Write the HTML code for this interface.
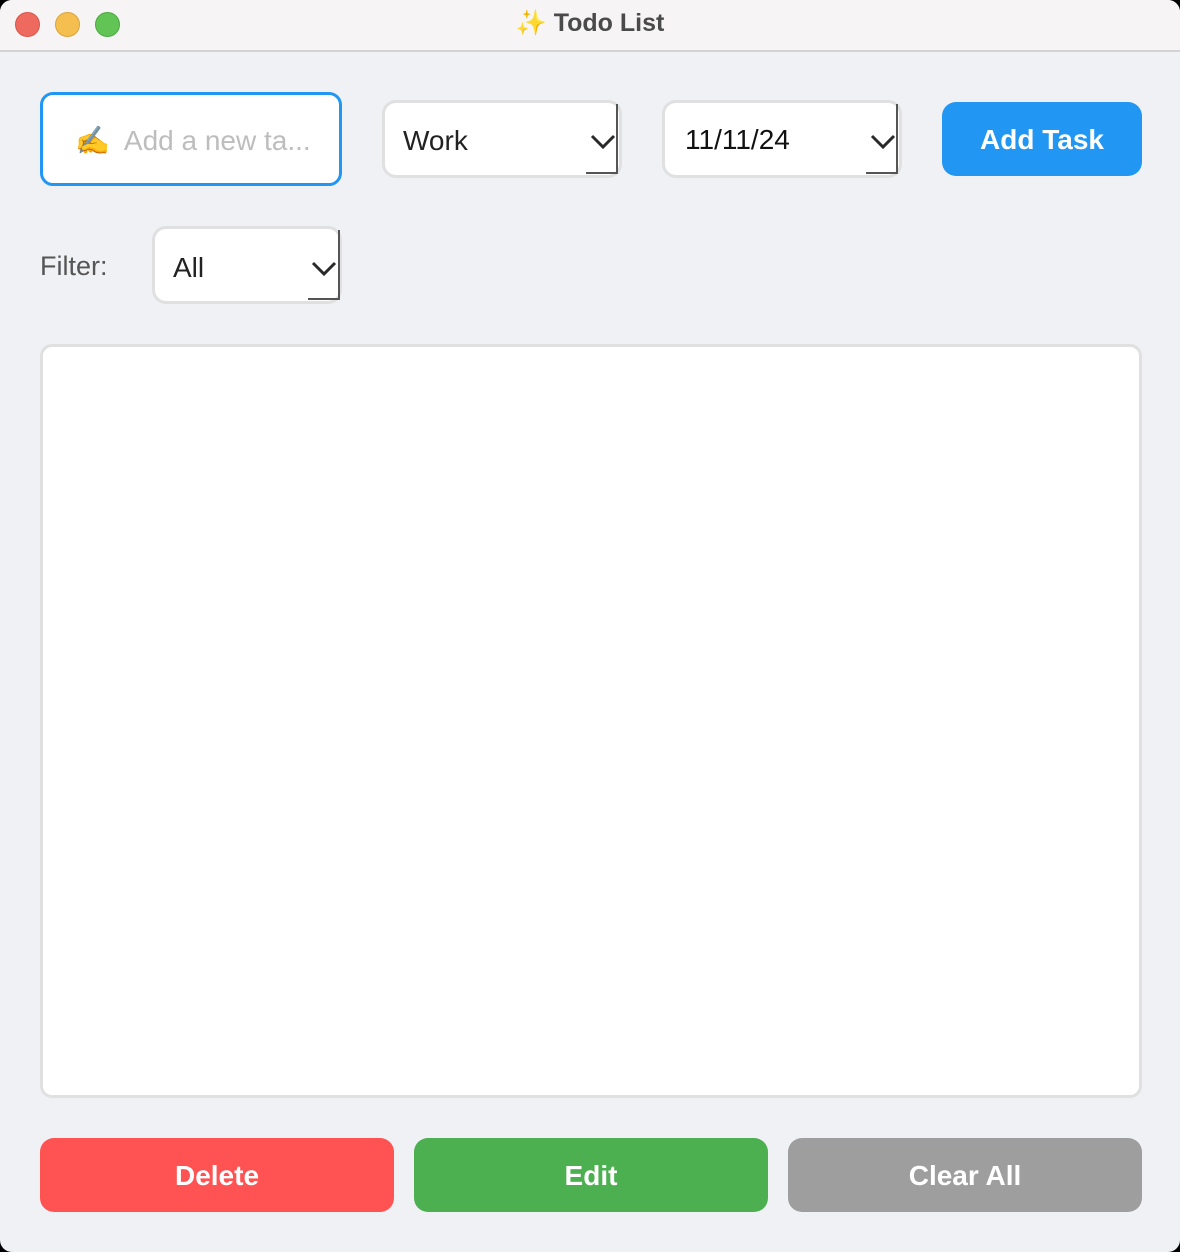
<!DOCTYPE html>
<html><head><meta charset="utf-8"><style>
*{margin:0;padding:0;box-sizing:border-box}
body{width:1180px;height:1252px;background:#000;font-family:"Liberation Sans",sans-serif;overflow:hidden;position:relative}
.win{position:absolute;left:0;top:0;width:1180px;height:1252px;background:#f0f1f5;border-radius:12px;overflow:hidden}
.tb{position:absolute;left:0;top:0;width:1180px;height:52px;background:#f6f4f4;border-bottom:2px solid #d4d2d2}
.dot{position:absolute;top:12px;width:25px;height:25px;border-radius:50%}
.title{position:absolute;left:0;right:0;top:9px;text-align:center;font-size:25px;font-weight:bold;color:#4a4a4a}
.abs{position:absolute}
.inp{left:40px;top:92px;width:302px;height:94px;border:3px solid #2196f3;border-radius:13px;background:#fff}
.sel{border:3px solid #e0e0e0;border-radius:14px;background:#fff;height:78px}
.sel span{position:absolute;left:18px;top:22px;font-size:28px;color:#222}
.sel svg{position:absolute}
.vr{position:absolute;width:2px;background:#555}
.hr{position:absolute;height:2px;background:#555}
.btn{position:absolute;border-radius:14px;color:#fff;font-weight:bold;font-size:28px;text-align:center;line-height:76px;height:74px}
</style></head><body><div class="win">
<div class="tb">
<div class="dot" style="left:15px;background:#ee6a5f;border:1px solid #d9544a"></div>
<div class="dot" style="left:55px;background:#f5bf4f;border:1px solid #dba33d"></div>
<div class="dot" style="left:95px;background:#61c454;border:1px solid #4ea843"></div>
<div class="title"><span style="color:#f5c84a">✨</span> Todo List</div>
</div>
<div class="abs inp"><span class="abs" style="left:32px;top:29px;font-size:28px;color:#bdbdbd;white-space:nowrap"><span style="color:#e8a93a">✍</span>&nbsp; Add a new ta...</span></div>

<div class="abs sel" style="left:382px;top:100px;width:240px"><span>Work</span>
<svg style="left:205px;top:30px" width="26" height="18"><path d="M2 3 L13 14 L24 3" stroke="#2a2a2a" stroke-width="3" fill="none"/></svg></div>
<div class="vr" style="left:616px;top:104px;height:70px"></div><div class="hr" style="left:586px;top:172px;width:32px"></div>

<div class="abs sel" style="left:662px;top:100px;width:240px"><span style="color:#111;left:20px;top:21px">11/11/24</span>
<svg style="left:205px;top:30px" width="26" height="18"><path d="M2 3 L13 14 L24 3" stroke="#2a2a2a" stroke-width="3" fill="none"/></svg></div>
<div class="vr" style="left:896px;top:104px;height:70px"></div><div class="hr" style="left:866px;top:172px;width:32px"></div>

<div class="btn" style="left:942px;top:102px;width:200px;background:#2196f3">Add Task</div>

<div class="abs" style="left:40px;top:251px;font-size:27px;color:#555">Filter:</div>
<div class="abs sel" style="left:152px;top:226px;width:190px"><span style="top:23px">All</span>
<svg style="left:156px;top:31px" width="26" height="18"><path d="M2 3 L13 14 L24 3" stroke="#2a2a2a" stroke-width="3" fill="none"/></svg></div>
<div class="vr" style="left:338px;top:230px;height:70px"></div><div class="hr" style="left:308px;top:298px;width:32px"></div>

<div class="abs" style="left:40px;top:344px;width:1102px;height:754px;background:#fff;border:3px solid #e0e0e0;border-radius:12px"></div>

<div class="btn" style="left:40px;top:1138px;width:354px;background:#ff5252">Delete</div>
<div class="btn" style="left:414px;top:1138px;width:354px;background:#4caf50">Edit</div>
<div class="btn" style="left:788px;top:1138px;width:354px;background:#9e9e9e">Clear All</div>
</div></body></html>
